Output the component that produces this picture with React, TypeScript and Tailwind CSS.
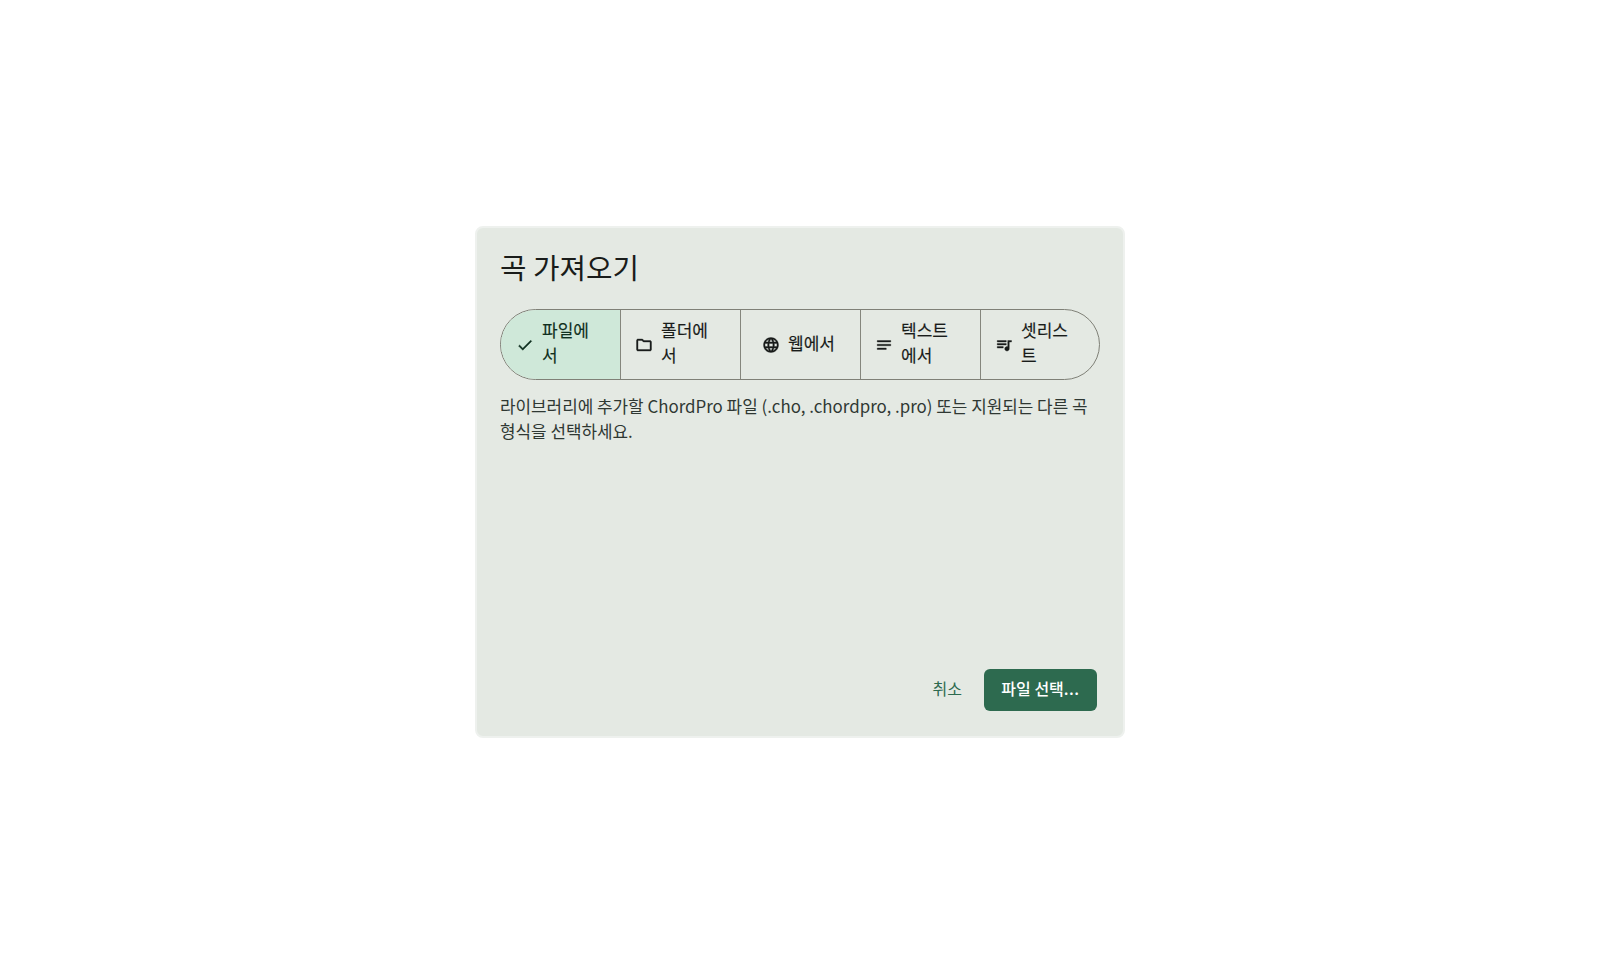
const FONT = "font-['Noto_Sans_CJK_KR','Noto_Sans',sans-serif]"

const ICONS = {
  check: "M9 16.17L4.83 12l-1.42 1.41L9 19 21 7l-1.41-1.41z",
  folder:
    "M9.17 6l2 2H20v10H4V6h5.17M10 4H4c-1.1 0-1.99.9-1.99 2L2 18c0 1.1.9 2 2 2h16c1.1 0 2-.9 2-2V8c0-1.1-.9-2-2-2h-8l-2-2z",
  web: "M11.99 2C6.47 2 2 6.48 2 12s4.47 10 9.99 10C17.52 22 22 17.52 22 12S17.52 2 11.99 2zm6.93 6h-2.95c-.32-1.25-.78-2.45-1.38-3.56 1.84.63 3.37 1.91 4.33 3.56zM12 4.04c.83 1.2 1.48 2.53 1.91 3.96h-3.82c.43-1.43 1.08-2.76 1.91-3.96zM4.26 14C4.1 13.36 4 12.69 4 12s.1-1.36.26-2h3.38c-.08.66-.14 1.32-.14 2 0 .68.06 1.34.14 2H4.26zm.82 2h2.95c.32 1.25.78 2.45 1.38 3.56-1.84-.63-3.37-1.9-4.33-3.56zm2.95-8H5.08c.96-1.66 2.49-2.93 4.33-3.56C8.81 5.55 8.35 6.75 8.03 8zM12 19.96c-.83-1.2-1.48-2.53-1.91-3.96h3.82c-.43 1.43-1.08 2.76-1.91 3.96zM14.34 14H9.66c-.09-.66-.16-1.32-.16-2 0-.68.07-1.35.16-2h4.68c.09.65.16 1.32.16 2 0 .68-.07 1.34-.16 2zm.25 5.56c.6-1.11 1.06-2.31 1.38-3.56h2.95c-.96 1.65-2.49 2.93-4.33 3.56zM16.36 14c.08-.66.14-1.32.14-2 0-.68-.06-1.34-.14-2h3.38c.16.64.26 1.31.26 2s-.1 1.36-.26 2h-3.38z",
  text: "M21 11.01L3 11v2h18zM3 16h12v2H3zM21 6H3v2.01L21 8z",
  setlist:
    "M15 6H3v2h12V6zm0 4H3v2h12v-2zM3 16h8v-2H3v2zM17 6v8.18c-.31-.11-.65-.18-1-.18-1.66 0-3 1.34-3 3s1.34 3 3 3 3-1.34 3-3V8h3V6h-5z",
}

const TABS = [
  { label: "파일에서", icon: ICONS.check, selected: true },
  { label: "폴더에서", icon: ICONS.folder },
  { label: "웹에서", icon: ICONS.web },
  { label: "텍스트에서", icon: ICONS.text },
  { label: "셋리스트", icon: ICONS.setlist },
]

function Tab({ label, icon, selected }: { label: string; icon: string; selected?: boolean }) {
  return (
    <div
      className={`flex min-w-0 items-center justify-center gap-2 border-l-[1.5px] border-[#85867d] pr-[18px] pl-[14px] first:border-l-0 first:pr-[17px] first:pl-[15px] ${
        selected ? "bg-[#cfe8d9] text-[#0f2f20]" : "text-[#191c1a]"
      }`}
    >
      <svg viewBox="0 0 24 24" className="h-[18px] w-[18px] shrink-0 fill-current stroke-current stroke-[0.5]">
        <path d={icon} />
      </svg>
      <span className="min-w-0 pb-[5px] text-[17px] leading-[25px] font-normal [-webkit-text-stroke:0.15px_currentColor] [word-break:break-all]">
        {label}
      </span>
    </div>
  )
}

export default function App() {
  return (
    <div className={`flex h-[964px] items-center justify-center bg-white ${FONT}`}>
      <div className="flex h-[512px] w-[650px] flex-col rounded-[8px] border-2 border-[#eef1ee] bg-[#e4e9e3] px-[23px] pt-[19px] pb-[25px]">
        <h1 className="text-[28.8px] leading-[40px] font-normal text-[#191c1a]">곡 가져오기</h1>
        <div className="mt-[22px] grid h-[71px] grid-cols-[119px_120px_120px_120px_119px] overflow-hidden rounded-[36px] border border-[#7f8077]">
          {TABS.map((t) => (
            <Tab key={t.label} {...t} />
          ))}
        </div>
        <p className="mt-[13px] text-[16.9px] leading-[25px] text-[#2f3833]">
          라이브러리에 추가할 ChordPro 파일 (.cho, .chordpro, .pro) 또는 지원되는 다른 곡 형식을 선택하세요.
        </p>
        <div className="mt-auto flex items-center justify-end pr-[3px]">
          <button className="mr-[22px] pb-[4px] text-[16px] leading-[24px] font-normal text-[#2d6a4f]">취소</button>
          <button className="flex h-[42px] w-[113px] items-center justify-center rounded-[6px] bg-[#2d6a4f] pb-[4px] text-[16px] font-medium text-white">
            파일 선택<span className="tracking-[0.5px]">...</span>
          </button>
        </div>
      </div>
    </div>
  )
}
